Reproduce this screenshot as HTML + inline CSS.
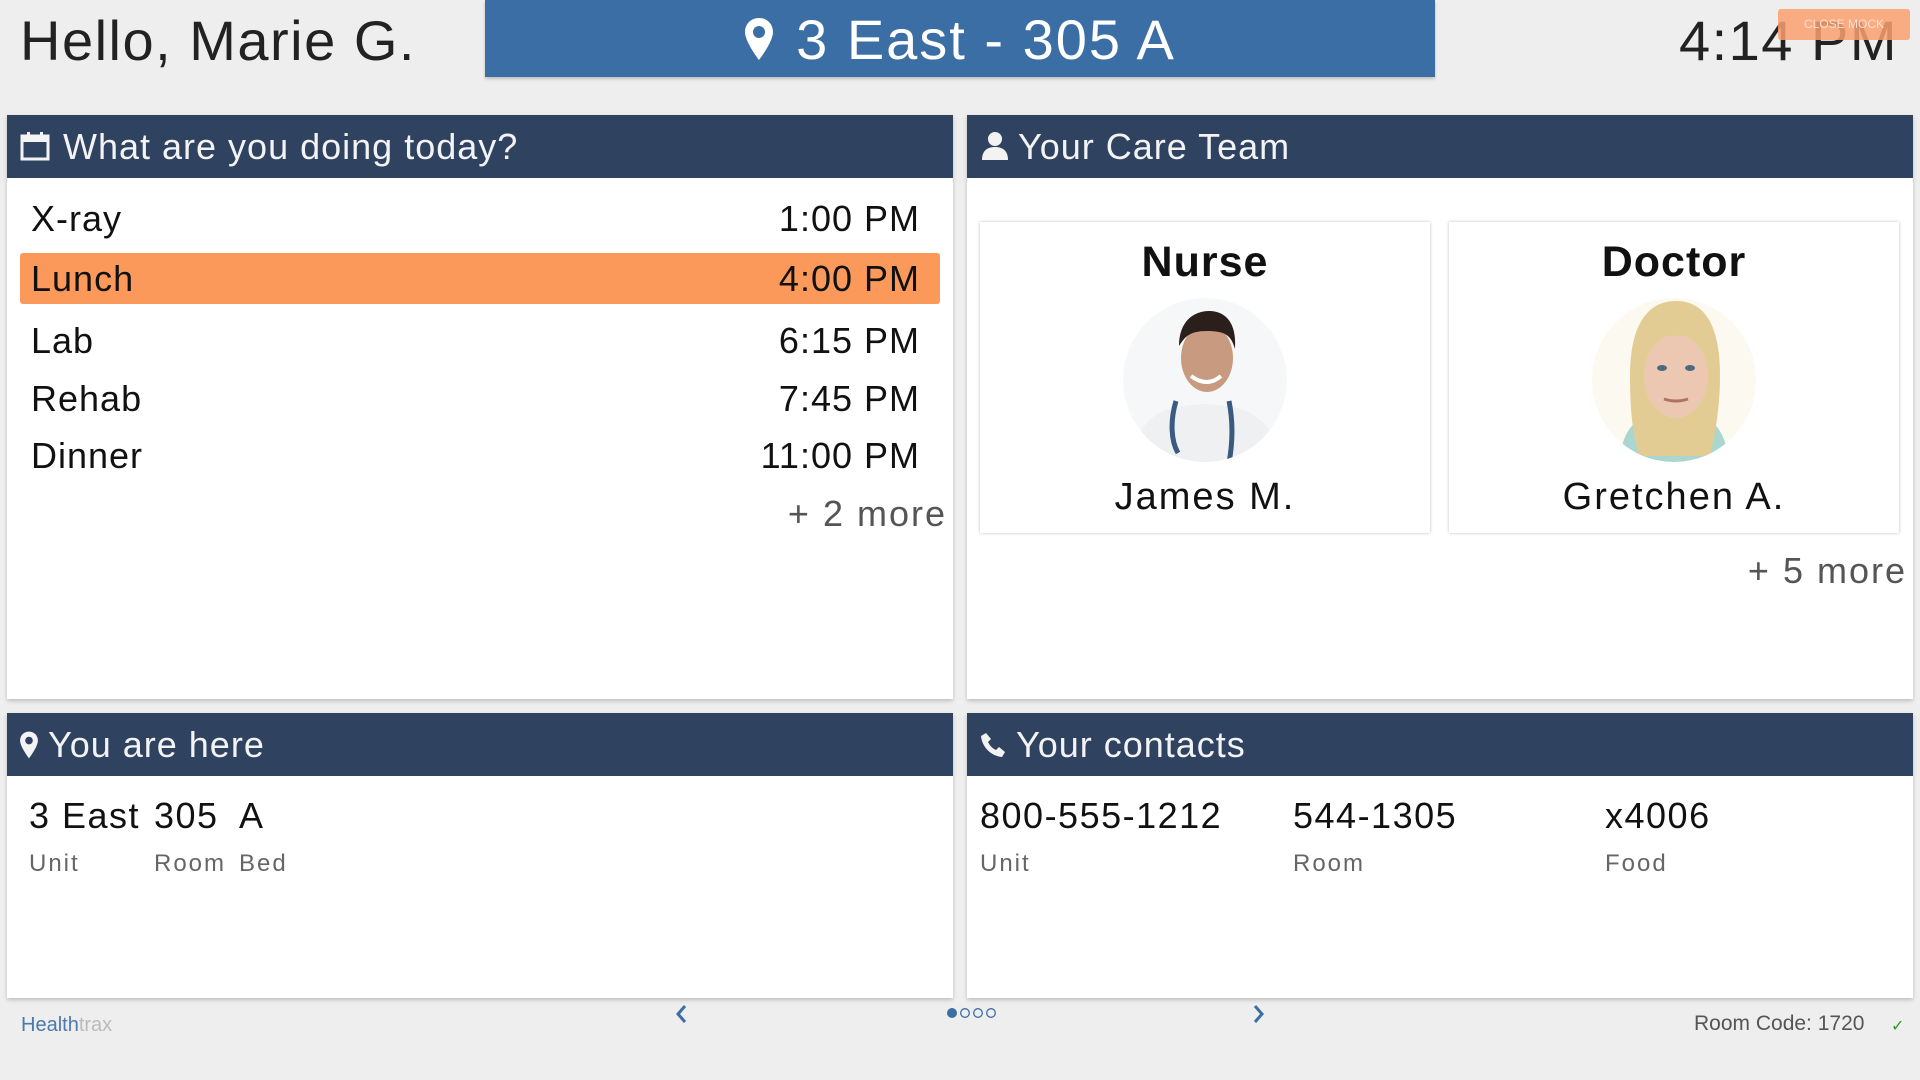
<!DOCTYPE html>
<html><head><meta charset="utf-8"><style>
*{box-sizing:border-box;margin:0;padding:0}
body{width:1920px;height:1080px;background:#eeeeee;font-family:"Liberation Sans",sans-serif;color:#111;position:relative;overflow:hidden;letter-spacing:1px}
.abs{position:absolute}
.panel{position:absolute;background:#fff;box-shadow:0 2px 4px rgba(0,0,0,.2)}
.ph{position:absolute;left:0;right:0;top:0;background:#2f4361;color:#f3f3f3;font-size:36px;line-height:63px;padding-left:56px}
.row{position:absolute;left:13px;right:13px;height:51px;font-size:36px;line-height:51px;padding:0 20px 0 11px}
.row span{float:right}
.card{position:absolute;top:107px;width:450px;height:311px;background:#fff;box-shadow:0 0 3px rgba(0,0,0,.25);text-align:center}
.card h3{font-size:43px;font-weight:bold;margin-top:16px;letter-spacing:1px}
.card .nm{position:absolute;left:0;right:0;top:254px;font-size:38px;letter-spacing:2px}
.v{position:absolute;font-size:36px;top:82px;letter-spacing:1.5px}
.l{position:absolute;font-size:24px;top:137px;color:#666;letter-spacing:2px}
</style></head><body>
<div class="abs" style="left:20px;top:8px;font-size:56px;color:#222;letter-spacing:1.5px">Hello, Marie G.</div>
<div class="abs" style="left:485px;top:0;width:950px;height:77px;background:#3b6ea5;color:#fff;font-size:56px;line-height:80px;text-align:center;letter-spacing:2px;box-shadow:0 2px 3px rgba(0,0,0,.2)">
<svg width="30" height="44" viewBox="0 0 30 44" style="vertical-align:-2px;margin-right:22px"><path d="M15 1C7 1 1 7 1 15c0 10 14 28 14 28s14-18 14-28C29 7 23 1 15 1zm0 20a6 6 0 1 1 0-12 6 6 0 0 1 0 12z" fill="#fff"/></svg>3 East - 305 A</div>
<div class="abs" style="right:22px;top:8px;font-size:56px;color:#222;letter-spacing:1.5px">4:14 PM</div>
<div class="abs" style="left:1778px;top:9px;width:132px;height:31px;background:rgba(250,160,110,.85);border-radius:3px;color:#fde0cf;font-size:12px;line-height:31px;text-align:center;letter-spacing:0">CLOSE MOCK</div>

<div class="panel" style="left:7px;top:115px;width:946px;height:584px">
<div class="ph"><svg width="30" height="30" viewBox="0 0 30 30" class="abs" style="left:13px;top:16px"><rect x="2" y="5" width="26" height="23" fill="none" stroke="#f3f3f3" stroke-width="3"/><rect x="2" y="5" width="26" height="6" fill="#f3f3f3"/><rect x="7" y="1" width="3" height="7" fill="#f3f3f3"/><rect x="20" y="1" width="3" height="7" fill="#f3f3f3"/></svg>What are you doing today?</div>
<div class="row" style="top:78px">X-ray<span>1:00 PM</span></div>
<div class="row" style="top:138px;background:#fb995a;border-radius:3px">Lunch<span>4:00 PM</span></div>
<div class="row" style="top:200px">Lab<span>6:15 PM</span></div>
<div class="row" style="top:258px">Rehab<span>7:45 PM</span></div>
<div class="row" style="top:315px">Dinner<span>11:00 PM</span></div>
<div class="abs" style="right:6px;top:378px;font-size:36px;color:#555;letter-spacing:2px">+ 2 more</div>
</div>

<div class="panel" style="left:967px;top:115px;width:946px;height:584px">
<div class="ph" style="padding-left:51px"><svg width="28" height="30" viewBox="0 0 28 30" class="abs" style="left:14px;top:16px"><circle cx="14" cy="8" r="7" fill="#f3f3f3"/><path d="M1 29c0-9 5-13 13-13s13 4 13 13z" fill="#f3f3f3"/></svg>Your Care Team</div>
<div class="card" style="left:13px"><h3>Nurse</h3>
<svg class="abs" style="left:141px;top:74px" width="168" height="168" viewBox="0 0 168 168"><defs><clipPath id="c1"><circle cx="84" cy="84" r="82"/></clipPath></defs><g clip-path="url(#c1)"><rect width="168" height="168" fill="#f6f7f8"/><path d="M10 170c5-50 30-60 74-62 44 2 70 12 74 62z" fill="#eef0f2"/><path d="M55 105c-6 20-5 40 2 52M108 105c4 20 4 40 0 62" stroke="#3a5a80" stroke-width="5" fill="none"/><ellipse cx="86" cy="62" rx="26" ry="34" fill="#c89a80"/><path d="M58 50c0-25 15-35 30-35s28 10 26 38c-4-14-10-18-28-18s-22 6-28 15z" fill="#2a1f1a"/><path d="M70 80q16 12 30 0" stroke="#fff" stroke-width="4" fill="none"/></g></svg>
<div class="nm">James M.</div></div>
<div class="card" style="left:482px"><h3>Doctor</h3>
<svg class="abs" style="left:141px;top:74px" width="168" height="168" viewBox="0 0 168 168"><defs><clipPath id="c2"><circle cx="84" cy="84" r="82"/></clipPath></defs><g clip-path="url(#c2)"><rect width="168" height="168" fill="#fbf9f0"/><path d="M30 170c0-40 20-55 54-55s54 15 54 55z" fill="#a9d6cf"/><path d="M40 80c0-55 20-75 46-75s44 20 44 75c0 30-5 60-10 80H50c-8-20-10-50-10-80z" fill="#e2cc93"/><ellipse cx="86" cy="80" rx="32" ry="42" fill="#ecc8b2"/><path d="M50 50c10-30 60-35 72 0-20-14-50-14-72 0z" fill="#e2cc93"/><ellipse cx="72" cy="72" rx="5" ry="3" fill="#4b6a80"/><ellipse cx="100" cy="72" rx="5" ry="3" fill="#4b6a80"/><path d="M74 103q12 4 24 0" stroke="#b0706a" stroke-width="3" fill="none"/></g></svg>
<div class="nm">Gretchen A.</div></div>
<div class="abs" style="right:6px;top:435px;font-size:36px;color:#555;letter-spacing:2px">+ 5 more</div>
</div>

<div class="panel" style="left:7px;top:713px;width:946px;height:285px">
<div class="ph" style="padding-left:41px"><svg width="20" height="28" viewBox="0 0 30 44" class="abs" style="left:12px;top:18px"><path d="M15 1C7 1 1 7 1 15c0 10 14 28 14 28s14-18 14-28C29 7 23 1 15 1zm0 20a6 6 0 1 1 0-12 6 6 0 0 1 0 12z" fill="#f3f3f3"/></svg>You are here</div>
<div class="v" style="left:22px">3 East</div><div class="v" style="left:147px">305</div><div class="v" style="left:232px">A</div>
<div class="l" style="left:22px">Unit</div><div class="l" style="left:147px">Room</div><div class="l" style="left:232px">Bed</div>
</div>

<div class="panel" style="left:967px;top:713px;width:946px;height:285px">
<div class="ph" style="padding-left:49px"><svg width="26" height="26" viewBox="0 0 26 26" class="abs" style="left:13px;top:19px"><path d="M6 1l5 6-3 3c2 4 4 6 8 8l3-3 6 5-3 5C11 24 2 15 1 4z" fill="#f3f3f3"/></svg>Your contacts</div>
<div class="v" style="left:13px">800-555-1212</div><div class="v" style="left:326px">544-1305</div><div class="v" style="left:638px">x4006</div>
<div class="l" style="left:13px">Unit</div><div class="l" style="left:326px">Room</div><div class="l" style="left:638px">Food</div>
</div>

<div class="abs" style="left:21px;top:1014px;font-size:20px;letter-spacing:0;color:#4a78b0">Health<span style="color:#bbb">trax</span></div>
<svg class="abs" style="left:674px;top:1004px" width="14" height="20" viewBox="0 0 14 20"><path d="M11 2L4 10l7 8" stroke="#3b6ea5" stroke-width="3" fill="none"/></svg>
<svg class="abs" style="left:1252px;top:1004px" width="14" height="20" viewBox="0 0 14 20"><path d="M3 2l7 8-7 8" stroke="#3b6ea5" stroke-width="3" fill="none"/></svg>
<svg class="abs" style="left:946px;top:1007px" width="60" height="12" viewBox="0 0 60 12"><circle cx="6" cy="6" r="5" fill="#3b6ea5"/><circle cx="19" cy="6" r="4.3" fill="none" stroke="#3b6ea5" stroke-width="1.3"/><circle cx="32" cy="6" r="4.3" fill="none" stroke="#3b6ea5" stroke-width="1.3"/><circle cx="45" cy="6" r="4.3" fill="none" stroke="#3b6ea5" stroke-width="1.3"/></svg>
<div class="abs" style="left:1694px;top:1012px;font-size:21px;color:#555;letter-spacing:0">Room Code: 1720</div>
<div class="abs" style="left:1891px;top:1016px;font-size:16px;color:#2a9a2a">✓</div>
</body></html>
